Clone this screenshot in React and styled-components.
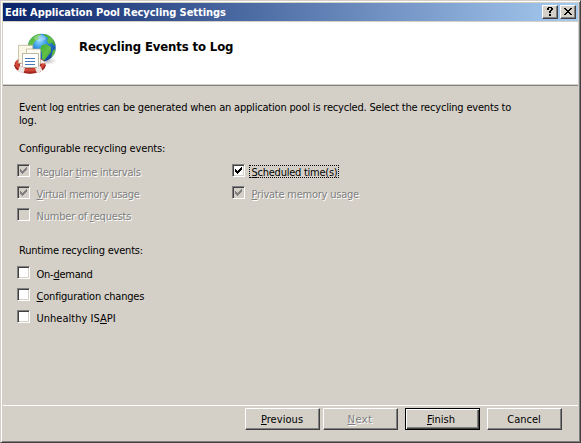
import React from "react";
import styled, { createGlobalStyle, css } from "styled-components";

const face = "#d4d0c8";
const shade = "#808080";
const dark = "#404040";

const Global = createGlobalStyle`
  * { box-sizing: border-box; }
  html, body { margin: 0; padding: 0; overflow: hidden; background: ${face}; }
  button { font: inherit; }
`;

const Window = styled.div`
  width: 581px;
  height: 443px;
  background: ${face};
  border: 1px solid;
  border-color: ${face} ${dark} ${dark} ${face};
  box-shadow: inset 1px 1px #fff, inset -1px -1px ${shade};
  padding: 2px;
  display: flex;
  flex-direction: column;
  font: 11px/13px "DejaVu Sans Condensed", "DejaVu Sans", sans-serif;
  color: #000;
  cursor: default;
`;

const Text = styled.span`
  white-space: nowrap;
  letter-spacing: ${(p) => p.$track || 0}px;
`;

const TitleBar = styled.header`
  height: 18px;
  flex: none;
  padding: 0 2px;
  display: flex;
  align-items: center;
  gap: 2px;
  background: linear-gradient(90deg, #0a246a, #a6caf0);
  color: #fff;
  font-weight: bold;
`;

const TitleText = styled(Text)`
  flex: 1;
`;

const CaptionButton = styled.button`
  width: 16px;
  height: 14px;
  padding: 0;
  display: flex;
  border: 1px solid;
  border-color: #fff ${dark} ${dark} #fff;
  box-shadow: inset -1px -1px ${shade};
  background: ${face};
`;

const Banner = styled.section`
  height: 62px;
  flex: none;
  margin-top: 1px;
  background: #fff;
  display: flex;
`;

const BannerIcon = styled.svg`
  width: 48px;
  height: 48px;
  margin: 7px 0 0 8px;
`;

const Heading = styled.h1`
  margin: 16px 0 0 20px;
  font-size: 13px;
  line-height: 17px;
  font-weight: bold;
`;

const BannerEdge = styled.div`
  height: 1px;
  flex: none;
  margin-top: 1px;
  background: ${shade};
`;

const Content = styled.main`
  flex: 1;
  padding: 15px 14px 0;
`;

const Intro = styled.p`
  margin: 0 0 15px 2px;
  display: flex;
  flex-direction: column;
`;

const GroupTitle = styled.h2`
  margin: 0 0 9px 2px;
  font: inherit;
`;

const Options = styled.div`
  display: grid;
  grid-template-columns: 215px auto;
  grid-auto-rows: 13px;
  row-gap: 9px;
  margin-bottom: ${(p) => p.$after || 0}px;
`;

const Option = styled.label`
  display: flex;
  align-items: flex-start;
  gap: 4px;
`;

const Box = styled.span`
  width: 13px;
  height: 13px;
  flex: none;
  display: flex;
  border: 1px solid;
  border-color: ${shade} #fff #fff ${shade};
  box-shadow: inset 1px 1px ${dark}, inset -1px -1px ${face};
  background: ${(p) => (p.$disabled ? face : "#fff")};
`;

const Label = styled(Text)`
  margin-top: 1px;
  padding: 1px 0 0 2.5px;
  height: 13px;
  ${(p) =>
    p.$disabled &&
    css`
      color: ${shade};
      text-shadow: 1px 1px #fff;
    `}
  ${(p) =>
    p.$focused &&
    css`
      width: 90px;
      outline: 1px dotted #000;
      outline-offset: -1px;
    `}
`;

const Key = styled.span`
  text-decoration: underline;
  text-decoration-thickness: 1px;
  text-underline-offset: 1px;
  text-decoration-skip-ink: none;
`;

const Footer = styled.footer`
  height: 35px;
  flex: none;
  border-top: 1px solid #fff;
  padding: 2px 16px 0 0;
  display: flex;
  justify-content: flex-end;
`;

const Button = styled.button`
  width: 75px;
  height: 22px;
  margin-left: ${(p) => p.$gap || 0}px;
  padding: 0 1px 0 0;
  display: flex;
  align-items: center;
  justify-content: center;
  background: ${face};
  color: #000;
  border: 1px solid;
  border-color: #fff ${dark} ${dark} #fff;
  box-shadow: inset -1px -1px ${shade};
  ${(p) =>
    p.$primary &&
    css`
      padding-right: 3px;
      border-color: #000;
      box-shadow: inset 1px 1px #fff, inset -1px -1px ${dark}, inset -2px -2px ${shade};
    `}
  ${(p) =>
    p.disabled &&
    css`
      color: ${shade};
      text-shadow: 1px 1px #fff;
    `}
`;

function Mnemonic({ text }) {
  const at = text.indexOf("&");
  if (at < 0) return text;
  return (
    <>
      {text.slice(0, at)}
      <Key>{text[at + 1]}</Key>
      {text.slice(at + 2)}
    </>
  );
}

function Check({ text, track, checked, disabled, focused }) {
  return (
    <Option>
      <Box $disabled={disabled}>
        {checked && (
          <svg width="11" height="11" shapeRendering="crispEdges">
            <path
              d="M2 4h1v3h-1zM3 5h1v3h-1zM4 6h1v3h-1zM5 5h1v3h-1zM6 4h1v3h-1zM7 3h1v3h-1zM8 2h1v3h-1z"
              fill={disabled ? shade : "#000"}
            />
          </svg>
        )}
      </Box>
      <Label $track={track} $disabled={disabled} $focused={focused}>
        <Mnemonic text={text} />
      </Label>
    </Option>
  );
}

function GlobeIcon() {
  return (
    <BannerIcon viewBox="11 29 48 48">
      <defs>
        <radialGradient id="sea" cx="42%" cy="25%" r="75%">
          <stop offset="0" stopColor="#8edcff" />
          <stop offset=".4" stopColor="#2c8be0" />
          <stop offset="1" stopColor="#123f9c" />
        </radialGradient>
        <linearGradient id="land" x1="0" y1="0" x2="1" y2="1">
          <stop offset="0" stopColor="#3fae3a" />
          <stop offset=".55" stopColor="#63c046" />
          <stop offset="1" stopColor="#2f8a35" />
        </linearGradient>
        <radialGradient id="shadow">
          <stop offset="0" stopColor="#888" stopOpacity=".6" />
          <stop offset="1" stopColor="#888" stopOpacity="0" />
        </radialGradient>
        <clipPath id="globe">
          <circle cx="41.7" cy="47.7" r="14" />
        </clipPath>
      </defs>
      <ellipse cx="46" cy="61" rx="11" ry="4" fill="url(#shadow)" />
      <circle cx="41.7" cy="47.7" r="14" fill="url(#sea)" />
      <g clipPath="url(#globe)" fill="url(#land)">
        <path d="M27 49l1-8 6-6 6-2 1 2-3 2 1 2-4 2-2 4-3 2z" />
        <path d="M43 34l5 0 5 4 3 7-2 1-2-3-3 1-2-3 1-3-3-2z" />
        <path d="M42 45l4-1 5 3 0 5-4 5-3 4-2-2 0-6-2-4z" />
        <path d="M53 50l3-1-1 5-4 4z" />
      </g>
      <ellipse cx="40" cy="38" rx="6" ry="3" fill="#fff" opacity=".3" />
      <ellipse cx="30" cy="65" rx="13" ry="6" fill="none" stroke="#a92218" strokeWidth="5" />
      <ellipse cx="30" cy="64" rx="13" ry="6" fill="none" stroke="#d85443" strokeWidth="3" />
      <path d="M41.500 59.500l3.800 3-2 2.500-4-3z" fill="#f2eeec" />
      <path d="M18.500 45.300h14.300v18h-14.300z" fill="#fbf7e6" stroke="#b7ad8c" strokeWidth=".7" />
      <path d="M26.500 49h14v15h-14z" fill="#fffdf2" stroke="#b7ad8c" strokeWidth=".7" />
      <path d="M22.500 53.500h16v14h-16z" fill="#fff" stroke="#aaa593" strokeWidth=".8" />
      <path d="M25 58.500h10M25 61.500h10M25 64.500h10" stroke="#4779bd" strokeWidth="1" />
      <path d="M16.600 64.500c1.400 4.400 7 6.500 13.400 6.500s12-2.100 13.400-6.500" fill="none" stroke="#a12620" strokeWidth="5.400" />
      <path d="M16.200 63.500c1.400 4.400 7.200 6.700 13.800 6.700s12.400-2.300 13.800-6.700" fill="none" stroke="#d0493a" strokeWidth="2.800" />
      <path d="M20 65.800l5 2.300-1.600 5.600-5.600-2.400zM35 68.100l5-2.300 2.600 4.800-5.600 2.900z" fill="#ece6e4" />
    </BannerIcon>
  );
}

export default function App() {
  return (
    <>
      <Global />
      <Window>
        <TitleBar>
          <TitleText $track={-0.06}>Edit Application Pool Recycling Settings</TitleText>
          <CaptionButton aria-label="Help">
            <svg width="14" height="12" shapeRendering="crispEdges">
              <path d="M5 1h4v1h-4zM4 2h2v2h-2zM8 2h2v2h-2zM7 4h2v1h-2zM6 5h2v2h-2zM6 8h2v2h-2z" />
            </svg>
          </CaptionButton>
          <CaptionButton aria-label="Close">
            <svg width="14" height="12" shapeRendering="crispEdges">
              <path d="M3 2h2v1h-2zM9 2h2v1h-2zM4 3h2v1h-2zM8 3h2v1h-2zM5 4h4v1h-4zM6 5h2v1h-2zM5 6h4v1h-4zM4 7h2v1h-2zM8 7h2v1h-2zM3 8h2v1h-2zM9 8h2v1h-2z" />
            </svg>
          </CaptionButton>
        </TitleBar>
        <Banner>
          <GlobeIcon />
          <Heading>
            <Text $track={-0.13}>Recycling Events to Log</Text>
          </Heading>
        </Banner>
        <BannerEdge />
        <Content>
          <Intro>
            <Text $track={-0.19}>
              Event log entries can be generated when an application pool is recycled. Select the recycling events to
            </Text>
            <Text $track={-0.15}>log.</Text>
          </Intro>
          <GroupTitle>
            <Text $track={-0.16}>Configurable recycling events:</Text>
          </GroupTitle>
          <Options $after={23}>
            <Check text="Regular &time intervals" track={-0.24} checked disabled />
            <Check text="&Scheduled time(s)" track={-0.25} checked focused />
            <Check text="&Virtual memory usage" track={-0.34} checked disabled />
            <Check text="&Private memory usage" track={-0.23} checked disabled />
            <Check text="Number of &requests" track={-0.2} disabled />
          </Options>
          <GroupTitle>
            <Text $track={-0.2}>Runtime recycling events:</Text>
          </GroupTitle>
          <Options>
            <Check text="On-&demand" track={-0.25} />
            <span />
            <Check text="&Configuration changes" track={-0.2} />
            <span />
            <Check text="Unhealthy IS&API" track={0.02} />
          </Options>
        </Content>
        <Footer>
          <Button>
            <Text $track={0.05}><Mnemonic text="&Previous" /></Text>
          </Button>
          <Button $gap={3} disabled>
            <Text $track={0.5}><Mnemonic text="&Next" /></Text>
          </Button>
          <Button $gap={7} $primary>
            <Text><Mnemonic text="&Finish" /></Text>
          </Button>
          <Button $gap={7}>
            <Text>Cancel</Text>
          </Button>
        </Footer>
      </Window>
    </>
  );
}
